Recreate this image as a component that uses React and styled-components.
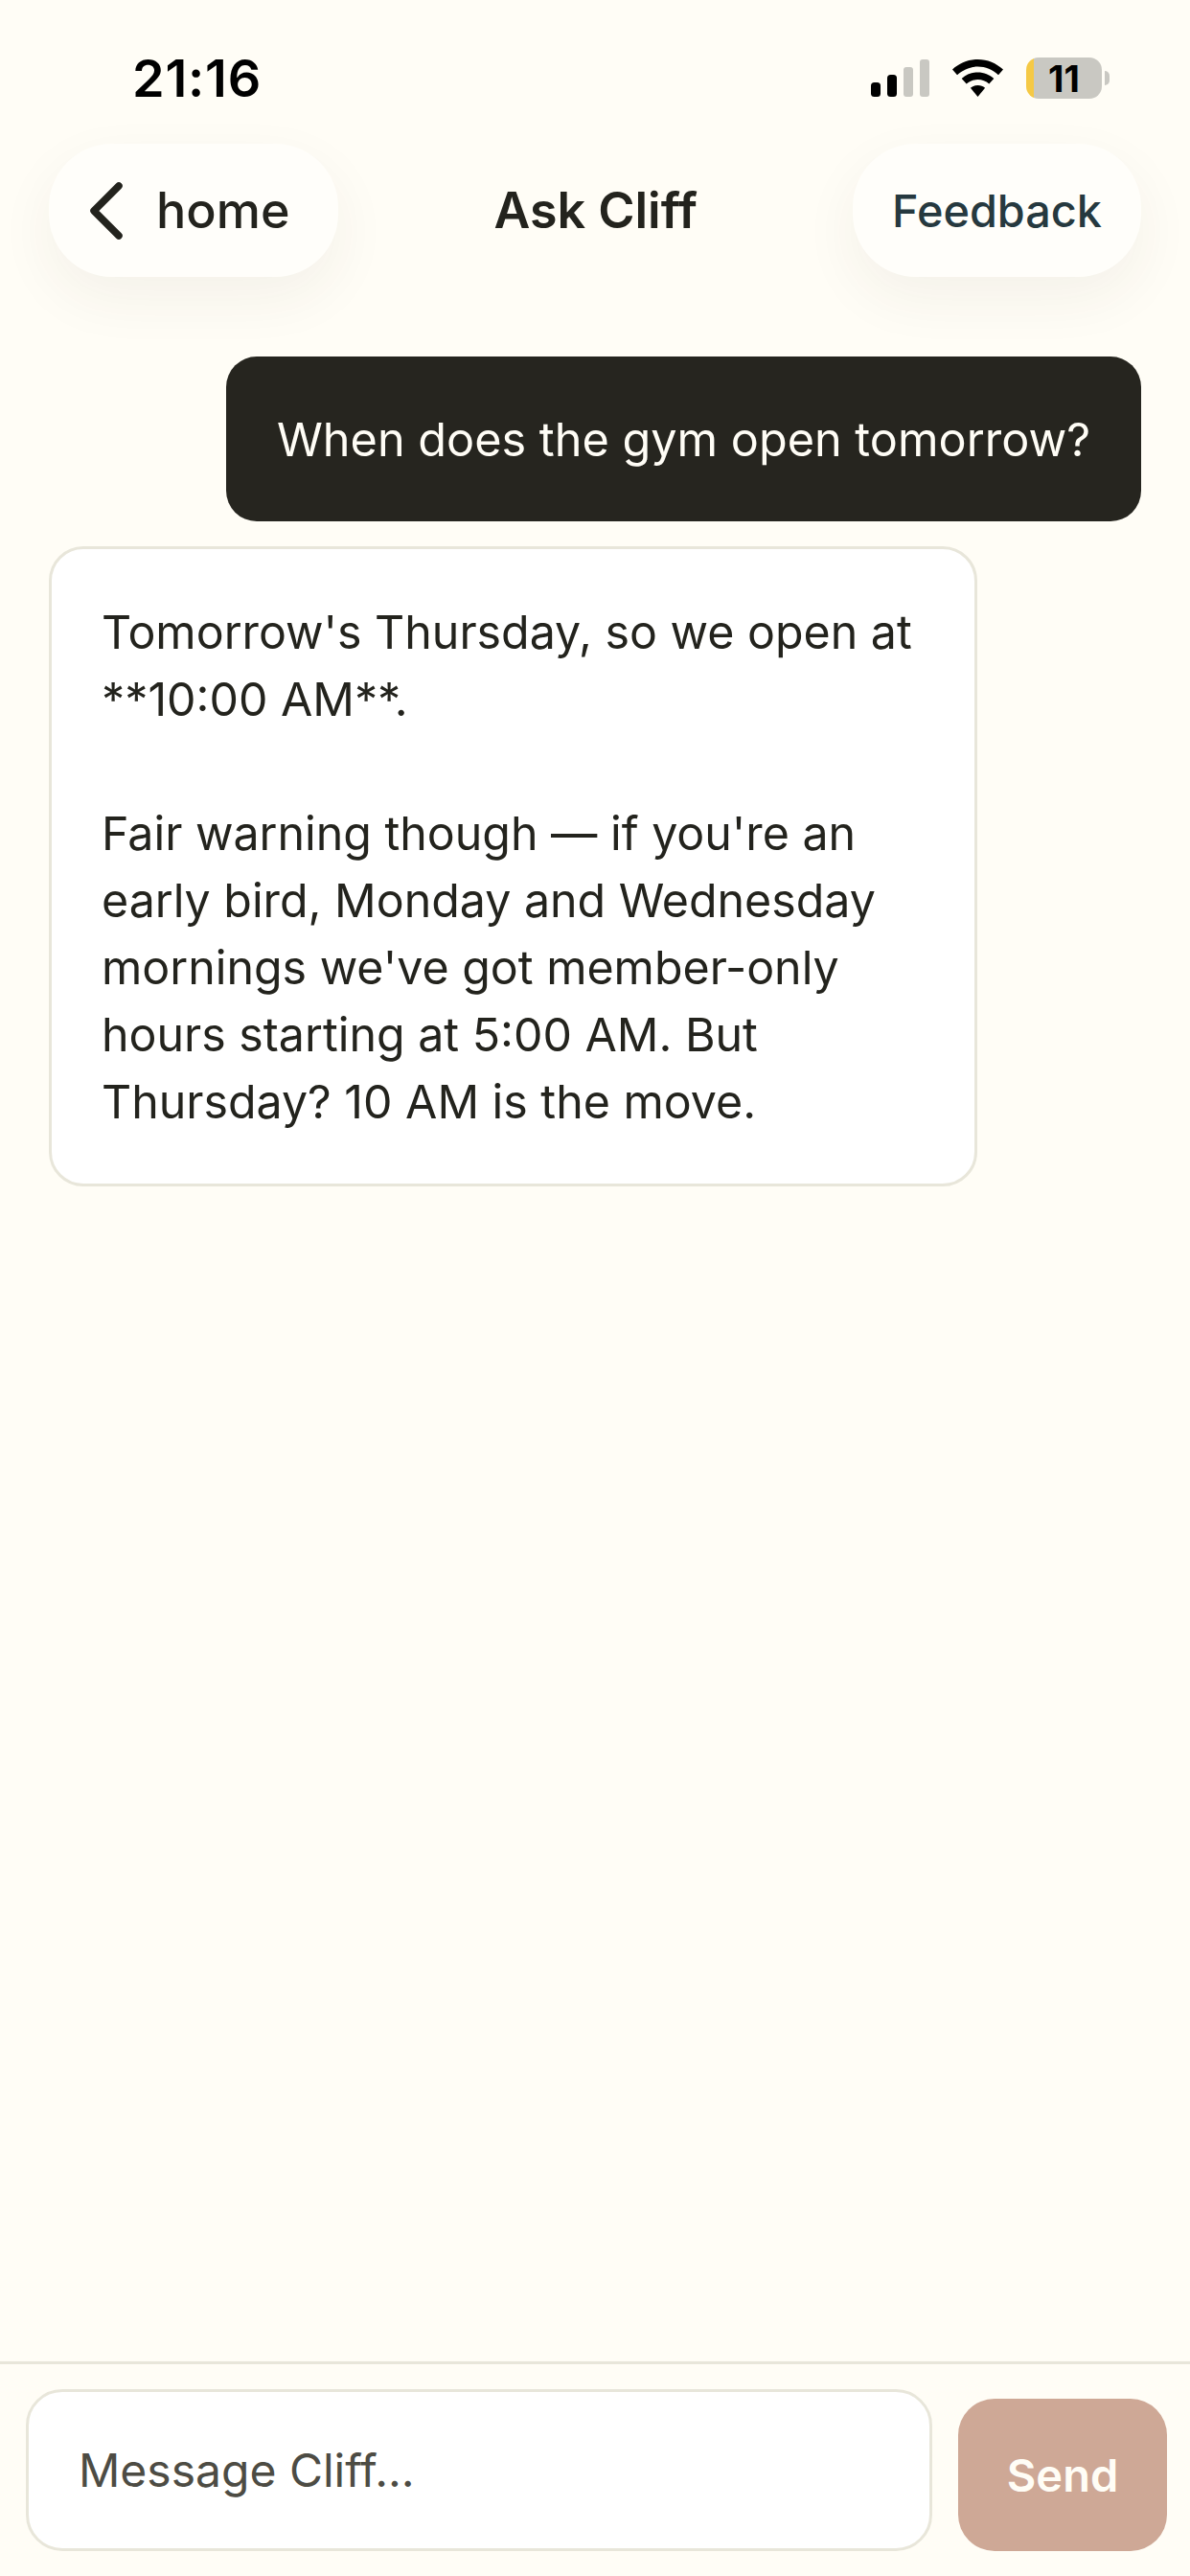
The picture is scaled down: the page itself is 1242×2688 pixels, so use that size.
import React from "react";
import styled, { createGlobalStyle } from "styled-components";

const Global = createGlobalStyle`
  html, body { margin: 0; padding: 0; background: #fffdf6; }
  * { box-sizing: border-box; }
`;

const Screen = styled.div`
  width: 1242px;
  height: 2688px;
  display: flex;
  flex-direction: column;
  background: #fffdf6;
  color: #23231d;
  font-family: Inter, "Liberation Sans", sans-serif;
  overflow: hidden;
`;

const StatusBar = styled.div`
  height: 150px;
  padding: 52px 92px 0 138px;
  display: flex;
  justify-content: space-between;
  align-items: flex-start;
`;

const Clock = styled.span`
  font-size: 54px;
  line-height: 60px;
  font-weight: 600;
  color: #000;
  letter-spacing: 0.8px;
`;

const StatusIcons = styled.div`
  display: flex;
  align-items: center;
  gap: 24px;
  margin-top: 8px;
`;

const Battery = styled.div`
  position: relative;
  width: 79px;
  height: 43px;
  border-radius: 13px;
  background: linear-gradient(to right, #f5c945 8px, #c9c8c2 8px);
  display: flex;
  align-items: center;
  justify-content: center;
  font-size: 38px;
  font-weight: 700;
  color: #000;
  &::after {
    content: "";
    position: absolute;
    right: -8px;
    top: 14px;
    width: 5px;
    height: 15px;
    border-radius: 0 8px 8px 0;
    background: #c9c8c2;
  }
`;

const Header = styled.header`
  height: 139px;
  padding: 0 51px;
  display: flex;
  justify-content: space-between;
  align-items: center;
`;

const Pill = styled.button`
  height: 139px;
  padding: ${(p) => p.$padding};
  display: flex;
  align-items: center;
  gap: ${(p) => p.$gap || "0"};
  border: 0;
  border-radius: 66px;
  background: #fffefa;
  box-shadow: 0 22px 60px rgba(60, 50, 30, 0.06);
  color: ${(p) => p.$color};
  font-family: inherit;
  font-size: ${(p) => p.$size};
  font-weight: 500;
`;

const Title = styled.h1`
  margin: 0;
  font-size: 52px;
  font-weight: 600;
  color: #23231d;
`;

const Messages = styled.main`
  flex: 1;
  padding: 83px 51px 0;
  display: flex;
  flex-direction: column;
  gap: 26px;
`;

const UserBubble = styled.div`
  align-self: flex-end;
  width: 955px;
  height: 172px;
  display: flex;
  align-items: center;
  justify-content: center;
  border-radius: 32px;
  background: #26251f;
  color: #fffdf6;
  font-size: 48.6px;
  white-space: nowrap;
`;

const AssistantBubble = styled.div`
  width: 969px;
  height: 668px;
  padding: 52px 52px 0;
  border: 3px solid #e8e6da;
  border-radius: 36px;
  background: #fff;
  font-size: 48.3px;
  line-height: 70px;
`;

const Line = styled.div`
  white-space: nowrap;
  min-height: 70px;
`;

const Composer = styled.footer`
  height: 224px;
  padding: 26px 24px 26px 27px;
  border-top: 3px solid #e8e6da;
  display: flex;
  align-items: flex-end;
  gap: 27px;
`;

const MessageInput = styled.input`
  width: 946px;
  height: 169px;
  padding: 0 52px;
  border: 3px solid #e8e6da;
  border-radius: 38px;
  background: #fff;
  outline: none;
  font-family: inherit;
  font-size: 48px;
  color: #4d4c44;
  &::placeholder {
    color: #4d4c44;
    opacity: 1;
  }
`;

const SendButton = styled.button`
  width: 218px;
  height: 159px;
  border: 0;
  border-radius: 38px;
  background: #cea896;
  color: #fffdf6;
  font-family: inherit;
  font-size: 47px;
  font-weight: 600;
`;

const SignalIcon = () => (
  <svg width="61" height="39" viewBox="0 0 61 39">
    <rect x="0" y="24" width="10" height="15" rx="3.5" fill="#000" />
    <rect x="17" y="16" width="10" height="23" rx="3.5" fill="#000" />
    <rect x="34" y="8" width="10" height="31" rx="3" fill="#c9c8c2" />
    <rect x="51" y="0" width="10" height="39" rx="3" fill="#c9c8c2" />
  </svg>
);

const WifiIcon = () => (
  <svg width="53" height="39" viewBox="0 0 53 39">
    <path d="M26.5 0C16.3 0 7.2 4 0 10.6l5 5.6C11 10.9 18.4 7.6 26.5 7.6s15.500 3.300 21.500 8.600l5-5.600C45.800 4 36.700 0 26.500 0z" fill="#000" />
    <path d="M26.500 13.500c-6.500 0-12.300 2.500-16.800 6.500l5 5.600c3.200-2.800 7.300-4.500 11.800-4.500s8.600 1.700 11.800 4.500l5-5.600c-4.500-4-10.300-6.500-16.800-6.500z" fill="#000" />
    <path d="M26.500 27c-3 0-5.500 1-7.600 2.800L26.500 39l7.600-9.200C32 28 29.500 27 26.500 27z" fill="#000" />
  </svg>
);

const BackChevron = () => (
  <svg width="38" height="62" viewBox="0 0 38 62" fill="none">
    <path d="M32 5L6 31l26 26" stroke="#23231d" strokeWidth="7.500" strokeLinecap="round" strokeLinejoin="round" />
  </svg>
);

export default function App() {
  return (
    <Screen>
      <Global />
      <StatusBar>
        <Clock>21:16</Clock>
        <StatusIcons>
          <SignalIcon />
          <WifiIcon />
          <Battery>11</Battery>
        </StatusIcons>
      </StatusBar>
      <Header>
        <Pill $padding="0 51px 0 41px" $gap="33px" $color="#23231d" $size="52px">
          <BackChevron />
          home
        </Pill>
        <Title>Ask Cliff</Title>
        <Pill $padding="0 41px" $color="#26393f" $size="46.800px">Feedback</Pill>
      </Header>
      <Messages>
        <UserBubble>When does the gym open tomorrow?</UserBubble>
        <AssistantBubble>
          <Line>Tomorrow's Thursday, so we open at</Line>
          <Line>**10:00 AM**.</Line>
          <Line />
          <Line>Fair warning though — if you're an</Line>
          <Line>early bird, Monday and Wednesday</Line>
          <Line>mornings we've got member-only</Line>
          <Line>hours starting at 5:00 AM. But</Line>
          <Line>Thursday? 10 AM is the move.</Line>
        </AssistantBubble>
      </Messages>
      <Composer>
        <MessageInput placeholder="Message Cliff..." />
        <SendButton>Send</SendButton>
      </Composer>
    </Screen>
  );
}
